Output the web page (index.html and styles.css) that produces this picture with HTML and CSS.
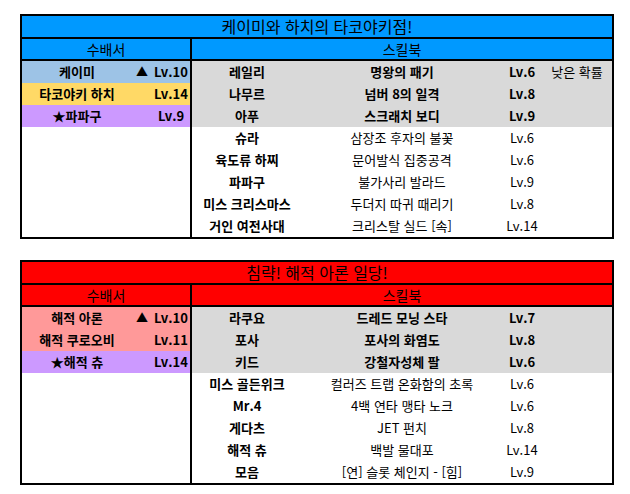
FILE: index.html
```html
<!DOCTYPE html>
<html lang="ko">
<head>
<meta charset="utf-8">
<link rel="stylesheet" href="styles.css">
</head>
<body>
<div class="page">
  <div class="tbl blue">
    <div class="title">케이미와 하치의 타코야키점!</div>
    <div class="head">
      <div class="hl">수배서</div>
      <div class="hr">스킬북</div>
    </div>
    <div class="body">
      <div class="left">
        <div class="lrow b c-lblue"><span class="ln">케이미</span><span class="lt">▲</span><span class="lv">Lv.10</span></div>
        <div class="lrow b c-yellow"><span class="ln">타코야키 하치</span><span class="lt"></span><span class="lv">Lv.14</span></div>
        <div class="lrow b c-purple"><span class="ln">★파파구</span><span class="lt"></span><span class="lv">Lv.9</span></div>
      </div>
      <div class="right">
        <div class="rrow b gray"><span class="rn">레일리</span><span class="rs">명왕의 패기</span><span class="rl">Lv.6</span><span class="rx">낮은 확률</span></div>
        <div class="rrow b gray"><span class="rn">나무르</span><span class="rs">넘버 8의 일격</span><span class="rl">Lv.8</span><span class="rx"></span></div>
        <div class="rrow b gray"><span class="rn">아푸</span><span class="rs">스크래치 보디</span><span class="rl">Lv.9</span><span class="rx"></span></div>
        <div class="rrow"><span class="rn">슈라</span><span class="rs">삼장조 후자의 불꽃</span><span class="rl">Lv.6</span><span class="rx"></span></div>
        <div class="rrow"><span class="rn">육도류 하찌</span><span class="rs">문어발식 집중공격</span><span class="rl">Lv.6</span><span class="rx"></span></div>
        <div class="rrow"><span class="rn">파파구</span><span class="rs">불가사리 발라드</span><span class="rl">Lv.9</span><span class="rx"></span></div>
        <div class="rrow"><span class="rn">미스 크리스마스</span><span class="rs">두더지 따귀 때리기</span><span class="rl">Lv.8</span><span class="rx"></span></div>
        <div class="rrow"><span class="rn">거인 여전사대</span><span class="rs">크리스탈 실드 [속]</span><span class="rl">Lv.14</span><span class="rx"></span></div>
      </div>
    </div>
  </div>

  <div class="tbl red">
    <div class="title">침략! 해적 아론 일당!</div>
    <div class="head">
      <div class="hl">수배서</div>
      <div class="hr">스킬북</div>
    </div>
    <div class="body">
      <div class="left">
        <div class="lrow b c-salmon"><span class="ln">해적 아론</span><span class="lt">▲</span><span class="lv">Lv.10</span></div>
        <div class="lrow b c-salmon"><span class="ln">해적 쿠로오비</span><span class="lt"></span><span class="lv">Lv.11</span></div>
        <div class="lrow b c-purple"><span class="ln">★해적 츄</span><span class="lt"></span><span class="lv">Lv.14</span></div>
      </div>
      <div class="right">
        <div class="rrow b gray"><span class="rn">라쿠요</span><span class="rs">드레드 모닝 스타</span><span class="rl">Lv.7</span><span class="rx"></span></div>
        <div class="rrow b gray"><span class="rn">포사</span><span class="rs">포사의 화염도</span><span class="rl">Lv.8</span><span class="rx"></span></div>
        <div class="rrow b gray"><span class="rn">키드</span><span class="rs">강철자성체 팔</span><span class="rl">Lv.6</span><span class="rx"></span></div>
        <div class="rrow"><span class="rn">미스 골든위크</span><span class="rs">컬러즈 트랩 온화함의 초록</span><span class="rl">Lv.6</span><span class="rx"></span></div>
        <div class="rrow"><span class="rn">Mr.4</span><span class="rs">4백 연타 맹타 노크</span><span class="rl">Lv.6</span><span class="rx"></span></div>
        <div class="rrow"><span class="rn">게다츠</span><span class="rs">JET 펀치</span><span class="rl">Lv.8</span><span class="rx"></span></div>
        <div class="rrow"><span class="rn">해적 츄</span><span class="rs">백발 물대포</span><span class="rl">Lv.14</span><span class="rx"></span></div>
        <div class="rrow"><span class="rn">모음</span><span class="rs">[연] 슬롯 체인지 - [힘]</span><span class="rl">Lv.9</span><span class="rx"></span></div>
      </div>
    </div>
  </div>
</div>
</body>
</html>
```

FILE: styles.css
```css
html, body {
  margin: 0;
  padding: 0;
  background: #ffffff;
}

body {
  font-family: "Noto Sans CJK KR", "Noto Sans", sans-serif;
  font-size: 13px;
  color: #000;
}

.page {
  padding: 14px 0 0 20px;
  display: flex;
  flex-direction: column;
  gap: 21px;
}

.tbl {
  width: 590px;
  border: 2px solid #000;
}

.title {
  height: 21px;
  line-height: 21px;
  text-align: center;
  font-size: 16px;
  border-bottom: 2px solid #000;
}

.head {
  display: flex;
  height: 20px;
  line-height: 20px;
  font-size: 14px;
  border-bottom: 2px solid #000;
}

.hl {
  width: 168px;
  text-align: center;
  border-right: 2px solid #000;
}

.hr {
  flex: 1;
  text-align: center;
}

.blue .title, .blue .head { background: #0099ff; }
.red .title, .red .head { background: #ff0000; }

.body {
  display: flex;
  height: 176px;
}

.left {
  width: 168px;
  border-right: 2px solid #000;
}

.right {
  flex: 1;
}

.lrow, .rrow {
  display: flex;
  height: 22px;
  line-height: 22px;
  white-space: nowrap;
}

.b { font-weight: bold; }

.ln { width: 110px; text-align: center; }
.lt { width: 20px; text-align: center; font-size: 12px; }
.lv { width: 38px; text-align: center; }

.rn { width: 110px; text-align: center; font-weight: bold; }
.rs { width: 200px; text-align: center; }
.rl { width: 40px; text-align: center; }
.rx { flex: 1; text-align: center; font-weight: normal; }

.c-lblue { background: #9dc3e6; }
.c-yellow { background: #ffd966; }
.c-purple { background: #cc99ff; }
.c-salmon { background: #ff9999; }
.gray { background: #d9d9d9; }
```
